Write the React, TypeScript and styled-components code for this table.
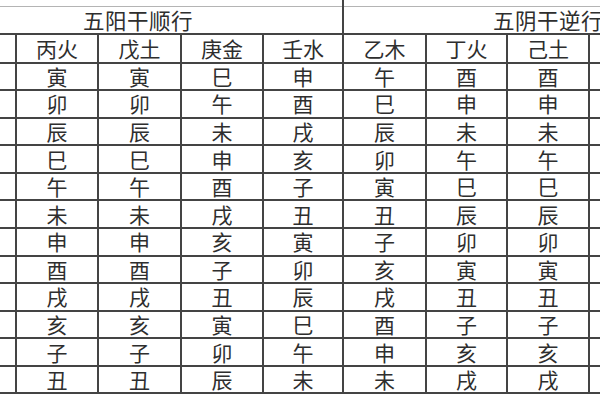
import React from "react";
import styled, { createGlobalStyle } from "styled-components";

const Global = createGlobalStyle`
  html, body {
    margin: 0;
    padding: 0;
    background: #ffffff;
    overflow: hidden;
  }
  body {
    width: 600px;
    height: 400px;
    font-family: "Noto Sans CJK SC", "Noto Sans", sans-serif;
  }
`;

const Page = styled.div`
  width: 600px;
  height: 400px;
  overflow: hidden;
  background: #ffffff;
`;

const Table = styled.table`
  border-collapse: collapse;
  table-layout: fixed;
  width: 819px;
  margin-left: -67px;
  margin-top: -14px;
  color: #2e2e2e;
  font-family: "Noto Sans CJK SC", "Noto Sans", sans-serif;
`;

const Col = styled.col<{ $w: number }>`
  width: ${(p) => p.$w}px;
`;

const TopCell = styled.td`
  height: 20px;
  padding: 0;
  border-right: 2px solid #444;
`;

const GroupRow = styled.tr`
  height: 27px;
`;

const GroupCell = styled.th`
  padding: 0;
  font-weight: 400;
  font-size: 21.5px;
  line-height: 1;
  text-align: center;
  border-top: 1px solid #b4b4b4;
  border-bottom: 2px solid #444;
  border-right: 2px solid #444;
  letter-spacing: 0.5px;
`;

const HeadRow = styled.tr`
  height: 29px;
`;

const HeadCell = styled.th`
  padding: 0;
  font-weight: 400;
  font-size: 21px;
  line-height: 1;
  text-align: center;
  border: 2px solid #444;
`;

const BodyRow = styled.tr`
  height: 27.58px;
`;

const Cell = styled.td`
  padding: 0;
  font-size: 21px;
  line-height: 1;
  text-align: center;
  border: 2px solid #444;
`;

const BRANCHES = ["子", "丑", "寅", "卯", "辰", "巳", "午", "未", "申", "酉", "戌", "亥"];

type Stem = { name: string; start: number; dir: 1 | -1 };

const STEMS: Stem[] = [
  { name: "甲木", start: 11, dir: 1 },
  { name: "丙火", start: 2, dir: 1 },
  { name: "戊土", start: 2, dir: 1 },
  { name: "庚金", start: 5, dir: 1 },
  { name: "壬水", start: 8, dir: 1 },
  { name: "乙木", start: 6, dir: -1 },
  { name: "丁火", start: 9, dir: -1 },
  { name: "己土", start: 9, dir: -1 },
  { name: "辛金", start: 0, dir: -1 },
  { name: "癸水", start: 3, dir: -1 },
];

const WIDTHS = [82, 82, 83, 82, 80, 83, 81, 82, 82, 82];

const branchAt = (s: Stem, i: number) =>
  BRANCHES[(((s.start + s.dir * i) % 12) + 12) % 12];

export default function App() {
  const rows = Array.from({ length: 12 }, (_, i) => i);
  return (
    <Page>
      <Global />
      <Table>
        <colgroup>
          {WIDTHS.map((w, i) => (
            <Col key={i} $w={w} />
          ))}
        </colgroup>
        <tbody>
          <tr>
            <TopCell colSpan={5} />
            <TopCell colSpan={5} />
          </tr>
          <GroupRow>
            <GroupCell colSpan={5}>五阳干顺行</GroupCell>
            <GroupCell colSpan={5}>五阴干逆行</GroupCell>
          </GroupRow>
          <HeadRow>
            {STEMS.map((s) => (
              <HeadCell key={s.name}>{s.name}</HeadCell>
            ))}
          </HeadRow>
          {rows.map((i) => (
            <BodyRow key={i}>
              {STEMS.map((s) => (
                <Cell key={s.name}>{branchAt(s, i)}</Cell>
              ))}
            </BodyRow>
          ))}
        </tbody>
      </Table>
    </Page>
  );
}
